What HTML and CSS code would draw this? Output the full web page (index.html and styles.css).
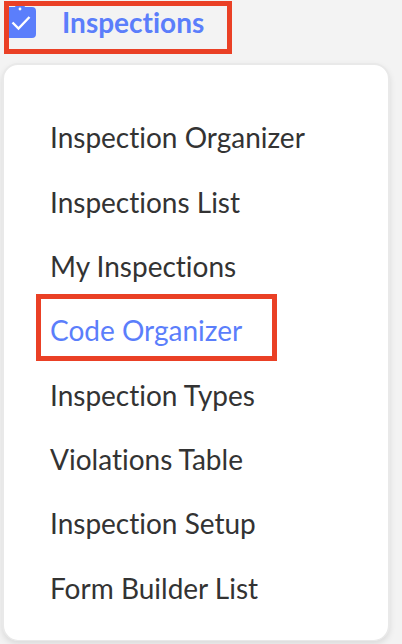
FILE: index.html
```
<!DOCTYPE html>
<html lang="en">
<head>
  <meta charset="utf-8">
  <meta name="viewport" content="width=device-width, initial-scale=1">
  <title>Inspections</title>
  <link rel="stylesheet" href="styles.css">
</head>
<body>
  <nav class="sidebar">
    <!-- Section heading -->
    <a class="section" href="#">
      <svg class="section-icon" viewBox="0 0 32 36" aria-hidden="true">
        <path fill="#5b7efb" d="M4 5h7c1-3 3-4 5-4s4 1 5 4h7a4 4 0 0 1 4 4v23a4 4 0 0 1-4 4H4a4 4 0 0 1-4-4V9a4 4 0 0 1 4-4z"/>
        <circle cx="16" cy="7" r="1.400" fill="#fff"/>
        <path fill="none" stroke="#fff" stroke-width="2.400" d="M8.500 20.500l6 6 11-11.500"/>
      </svg>
      Inspections
    </a>

    <!-- Submenu -->
    <ul class="menu">
      <li><a href="#">Inspection Organizer</a></li>
      <li><a href="#">Inspections List</a></li>
      <li><a href="#">My Inspections</a></li>
      <li><a class="active" href="#">Code Organizer</a></li>
      <li><a href="#">Inspection Types</a></li>
      <li><a href="#">Violations Table</a></li>
      <li><a href="#">Inspection Setup</a></li>
      <li><a href="#">Form Builder List</a></li>
    </ul>
  </nav>
</body>
</html>
```
FILE: styles.css
```
* { box-sizing: border-box; }
body {
  margin: 0;
  background: #f3f3f3;
  color: #333;
  font-family: Lato, sans-serif;
  font-size: 28px;
  font-variant-ligatures: none;
  line-height: 32px;
}
a { color: inherit; text-decoration: none; }

.sidebar {
  display: flex;
  flex-direction: column;
  min-height: 100vh;
  padding: 1px 12px 3px 2px;
}

.section {
  display: flex;
  align-items: flex-start;
  align-self: flex-start;
  gap: 26px;
  height: 53px;
  margin-left: 2px;
  padding: 5px 28px 0 0;
  color: #5b7efb;
  font-weight: bold;
  position: relative;
}
.section-icon { width: 32px; height: 36px; margin-top: -4px; }

/* red callout frames */
.section::after,
.active::after {
  content: "";
  position: absolute;
  border: 5px solid #ea4025;
}
.section::after { inset: 0; }
.active::after { inset: -20px -35px -15px -14px; }

.menu {
  flex: 1;
  display: grid;
  grid-auto-rows: 1fr;
  align-items: center;
  margin: 9px 0 0;
  padding: 40px 46px 20px;
  list-style: none;
  background: #fff;
  border: 2px solid #e9e9e9;
  border-bottom-width: 1px;
  border-radius: 16px;
  box-shadow: 0 3px 6px rgba(0, 0, 0, 0.1);
}
.menu a { display: inline-block; }
.active { color: #5b7efb; position: relative; }
```
